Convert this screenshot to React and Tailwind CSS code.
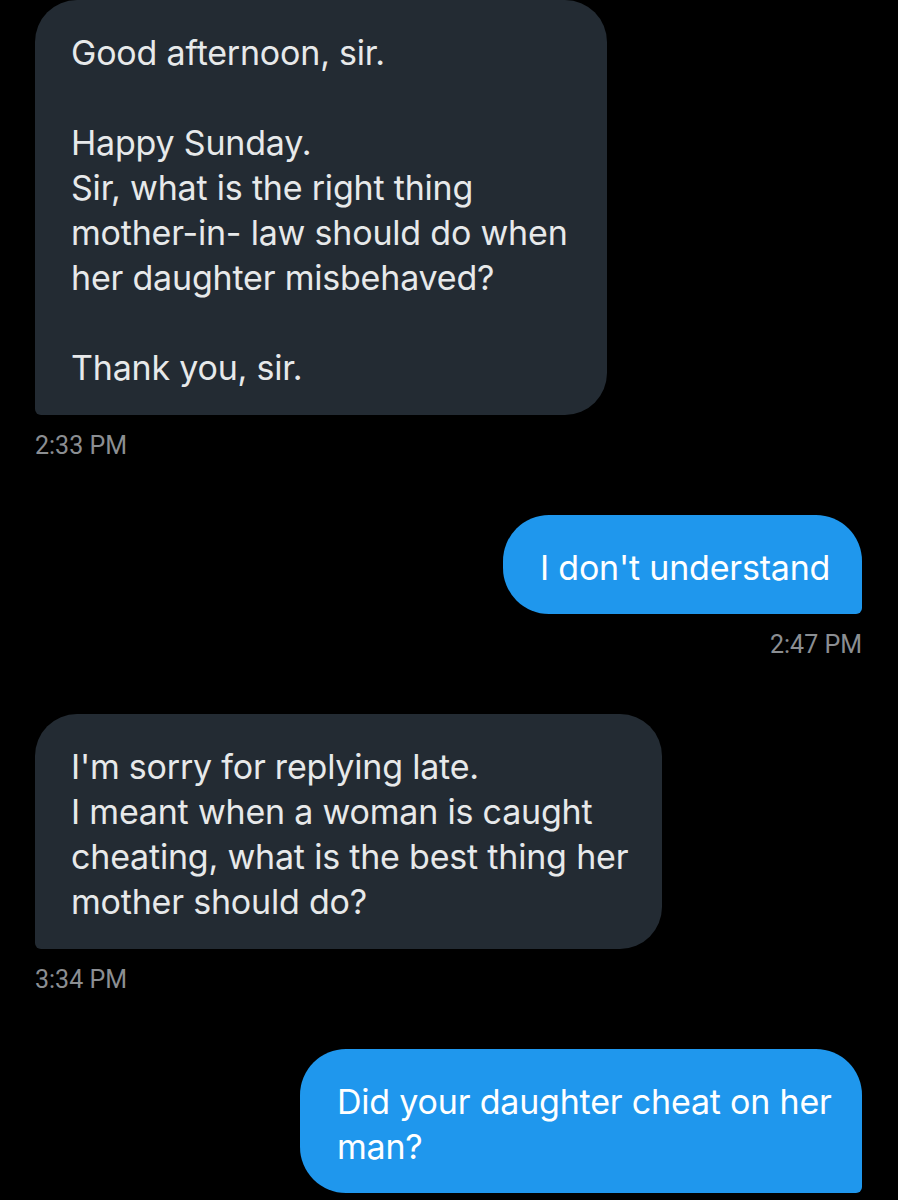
export default function App() {
  const recv = "self-start bg-[#232b33] text-[#e7e9ea] rounded-[42px] rounded-bl-[6px] px-[36px] pt-[30px] pb-[25px] text-[34px] leading-[45px] tracking-[-0.2px] whitespace-nowrap";
  const sent = "self-end bg-[#1f97ed] text-white rounded-[46px] rounded-br-[6px] px-[37px] pt-[30px] pb-[24px] text-[34px] leading-[45px] tracking-[-0.2px] whitespace-nowrap";
  const ts = "mt-[16px] mb-[54px] text-[25px] leading-[30px] text-[#8b8e92]";
  const body = { fontFamily: "Inter, 'Noto Sans', sans-serif" };
  const tsFont = { fontFamily: "Roboto, 'Liberation Sans', sans-serif" };
  return (
    <div className="h-[1200px] w-[898px] overflow-hidden bg-black pl-[35px] pr-[36px] flex flex-col" style={body}>
      <div className={recv + " w-[572px]"}>
        Good afternoon, sir.
        <br />
        <br />
        Happy Sunday.
        <br />
        Sir, what is the right thing
        <br />
        mother-in- law should do when
        <br />
        her daughter misbehaved?
        <br />
        <br />
        Thank you, sir.
      </div>
      <div className={ts + " self-start"} style={tsFont}>2:33 PM</div>

      <div className={sent + " w-[359px]"}>I don't understand</div>
      <div className={ts + " self-end"} style={tsFont}>2:47 PM</div>

      <div className={recv + " w-[627px]"}>
        I'm sorry for replying late.
        <br />
        I meant when a woman is caught
        <br />
        cheating, what is the best thing her
        <br />
        mother should do?
      </div>
      <div className={ts + " self-start"} style={tsFont}>3:34 PM</div>

      <div className={sent + " w-[562px] shrink-0"}>
        Did your daughter cheat on her
        <br />
        man?
      </div>
    </div>
  );
}
